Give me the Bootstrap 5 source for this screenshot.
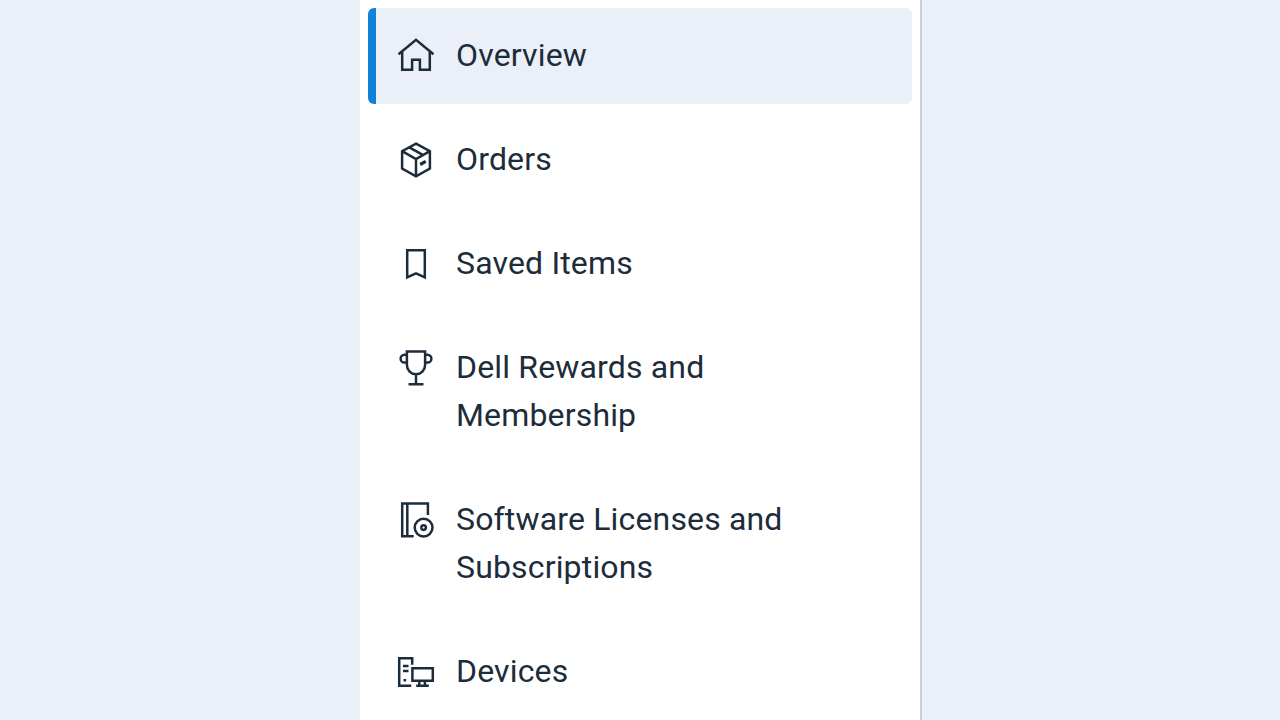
<!DOCTYPE html>
<html lang="en">
<head>
<meta charset="utf-8">
<meta name="viewport" content="width=device-width, initial-scale=1">
<title>Account menu</title>
<link rel="stylesheet" href="https://cdn.jsdelivr.net/npm/bootstrap@5.3.0/dist/css/bootstrap.min.css">
<style>
  body { background: #ebf0f8; font-family: Roboto, "Liberation Sans", sans-serif; color: #1d2c3b; }
  .side-panel { width: 560px; height: 720px; background: #fff; box-shadow: 2px 0 0 #c5cfde; }
  .side-link { font-size: 32px; line-height: 48px; letter-spacing: .16px; color: #1d2c3b; padding: 24px 28px 24px 20px; border-left: 8px solid transparent; border-radius: 6px; gap: 20px; }
  .side-link:hover { color: #1d2c3b; }
  .side-link.active { background: #ebf0f8; border-left-color: #1282d6; }
  .side-link svg { width: 40px; height: 48px; fill: none; stroke: #1d2c3b; stroke-width: 2.5; }
  .side-link span { max-width: 340px; margin-top: -1px; margin-bottom: 1px; }
</style>
</head>
<body class="overflow-hidden">
<aside class="side-panel mx-auto overflow-hidden">
  <nav class="nav flex-column flex-nowrap p-2 gap-2" aria-label="Account">
    <a class="side-link active d-flex align-items-start text-decoration-none" href="#" aria-current="page">
      <svg class="flex-shrink-0" viewBox="0 0 40 48"><path d="M2.500 22.300 20 7.900l17.500 14.400M6.200 20v17.800h9.900V27.800h7.800v10h9.900V20"/></svg>
      <span>Overview</span>
    </a>
    <a class="side-link d-flex align-items-start text-decoration-none" href="#">
      <svg class="flex-shrink-0" viewBox="0 0 40 48"><path d="M20 7.600 33.900 15.200v17.400L20 40.400 6.100 32.600V15.200zM6.100 15.200 20 23l13.900-7.800M20 23v17.400M13.300 11.300 27.200 19.100"/><path d="M24.200 28.500l5.500-3.200" stroke-width="3.200"/></svg>
      <span>Orders</span>
    </a>
    <a class="side-link d-flex align-items-start text-decoration-none" href="#">
      <svg class="flex-shrink-0" viewBox="0 0 40 48"><path d="M11.200 10.200h17.600v27.200L20 33.400l-8.800 4z"/></svg>
      <span>Saved Items</span>
    </a>
    <a class="side-link d-flex align-items-start text-decoration-none" href="#">
      <svg class="flex-shrink-0" viewBox="0 0 40 48"><path d="M10.900 7.500h18.200v13.600a9.100 9.100 0 0 1-18.200 0zM10.900 10.800H8.500a3.900 3.900 0 0 0 0 7.800h2.400M29.100 10.800h2.400a3.900 3.900 0 0 1 0 7.800h-2.400M20 30.200v10M12.500 40.200h15"/></svg>
      <span>Dell Rewards and Membership</span>
    </a>
    <a class="side-link d-flex align-items-start text-decoration-none" href="#">
      <svg class="flex-shrink-0" viewBox="0 0 40 48"><path d="M31.900 19V7.500H6.200v32.700h11.500M11.300 7.500v32.700"/><circle cx="27.600" cy="31.600" r="8.900"/><circle cx="27.600" cy="31.600" r="2.300"/></svg>
      <span>Software Licenses and Subscriptions</span>
    </a>
    <a class="side-link d-flex align-items-start text-decoration-none" href="#">
      <svg class="flex-shrink-0" viewBox="0 0 40 48"><path d="M16.200 16.700v-6.500h-13v27.600h12M7 18h5.500M7 23h5.500M7.500 32.300h2.600M16.400 20.200h20.400v12.600H16.400zM23.300 32.800v5M28.900 32.800v5M20.200 37.800h12.600"/></svg>
      <span>Devices</span>
    </a>
  </nav>
</aside>
<script src="https://cdn.jsdelivr.net/npm/bootstrap@5.3.0/dist/js/bootstrap.bundle.min.js"></script>
</body>
</html>
